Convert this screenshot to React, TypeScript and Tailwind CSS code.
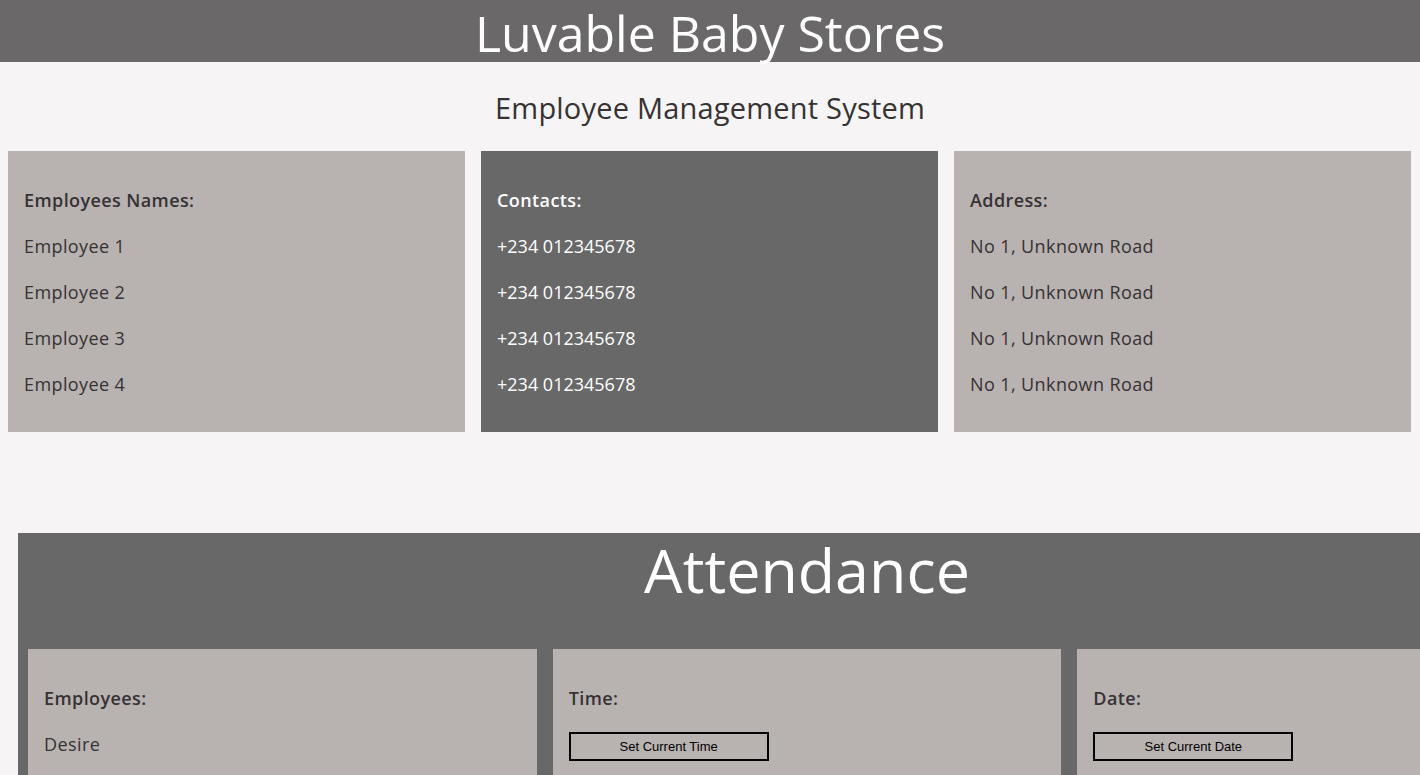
const employees = ["Employee 1", "Employee 2", "Employee 3", "Employee 4"];
const contacts = ["+234 012345678", "+234 012345678", "+234 012345678", "+234 012345678"];
const addresses = ["No 1, Unknown Road", "No 1, Unknown Road", "No 1, Unknown Road", "No 1, Unknown Road"];

function InfoCard({ title, rows, dark }: { title: string; rows: string[]; dark?: boolean }) {
  return (
    <div
      className={`flex flex-col gap-[24px] pl-4 pt-[38px] pb-[37px] ${
        dark ? "bg-[#686868] text-white" : "bg-[#b8b2b1] text-[#353333] tracking-[0.4px]"
      }`}
    >
      <p className="font-semibold leading-[22px] tracking-[0.4px]">{title}</p>
      {rows.map((r, i) => (
        <p key={i} className="leading-[22px]">
          {r}
        </p>
      ))}
    </div>
  );
}

export default function App() {
  return (
    <div className="min-h-screen bg-[#f6f4f5] font-['Open_Sans',sans-serif] text-[18px] overflow-x-hidden">
      <header className="h-[62px] bg-[#6a6868] flex items-center justify-center">
        <h1 className="text-white text-[50px] leading-none pt-[4px]">Luvable Baby Stores</h1>
      </header>

      <h2 className="text-center text-[29px] text-[#353333] pt-[29px] pb-[26px] leading-[34px] tracking-[0.2px]">
        Employee Management System
      </h2>

      <div className="grid grid-cols-3 gap-4 pl-2 pr-[9px]">
        <InfoCard title="Employees Names:" rows={employees} />
        <InfoCard title="Contacts:" rows={contacts} dark />
        <InfoCard title="Address:" rows={addresses} />
      </div>

      <section className="mt-[101px] ml-[18px] w-[1578px] bg-[#686868] px-[10px]">
        <h2 className="text-white text-[61px] text-center leading-none h-[116px] flex items-center justify-center pb-[44px]">
          Attendance
        </h2>
        <div className="grid grid-cols-3 gap-4">
          <div className="bg-[#b8b2b1] text-[#353333] flex flex-col gap-[24px] pl-4 pt-[38px] pb-[30px] tracking-[0.4px]">
            <p className="font-semibold leading-[22px]">Employees:</p>
            <p className="leading-[22px]">Desire</p>
          </div>
          <div className="bg-[#b8b2b1] text-[#353333] flex flex-col gap-[23px] pl-4 pt-[38px] pb-[30px]">
            <p className="font-semibold leading-[22px] tracking-[0.4px]">Time:</p>
            <button className="w-[200px] h-[29px] border-2 border-black font-['Liberation_Sans',Arial,sans-serif] text-[13px] text-black">
              Set Current Time
            </button>
          </div>
          <div className="bg-[#b8b2b1] text-[#353333] flex flex-col gap-[23px] pl-4 pt-[38px] pb-[30px]">
            <p className="font-semibold leading-[22px] tracking-[0.4px]">Date:</p>
            <button className="w-[200px] h-[29px] border-2 border-black font-['Liberation_Sans',Arial,sans-serif] text-[13px] text-black">
              Set Current Date
            </button>
          </div>
        </div>
      </section>
    </div>
  );
}
